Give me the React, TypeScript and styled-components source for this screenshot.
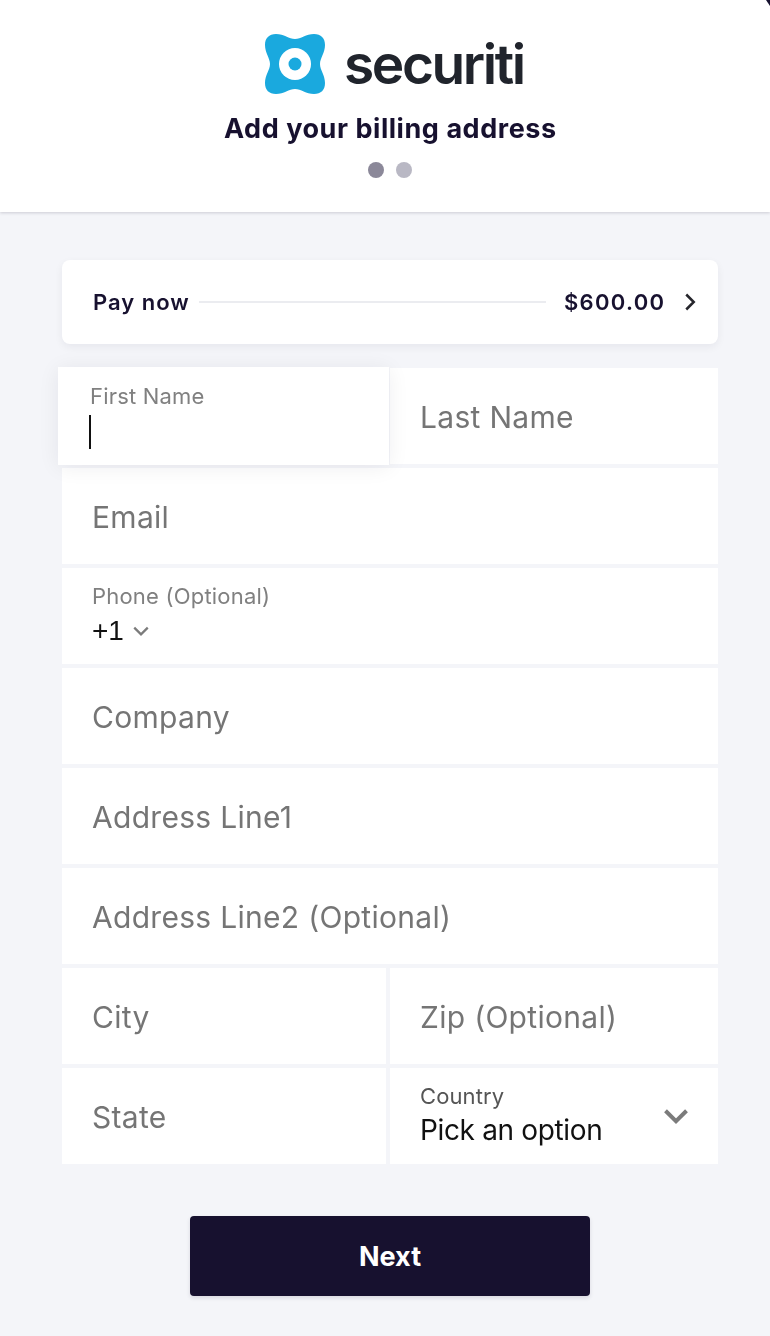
import React from 'react';
import styled, { createGlobalStyle, css } from 'styled-components';

const GlobalStyle = createGlobalStyle`
  html, body {
    margin: 0;
    padding: 0;
    background: #f4f5f9;
    font-family: Inter, "Liberation Sans", sans-serif;
  }
  * {
    box-sizing: border-box;
  }
`;

// own layer so the text gets plain grey antialiasing like the reference
const softText = css`
  will-change: transform;
`;

function Chevron({ size, stroke, weight }: { size: number; stroke: string; weight: number }) {
  return (
    <svg width={size} height={size} viewBox="0 0 24 24" fill="none">
      <path d="M3 7.5 L12 16.5 L21 7.5" stroke={stroke} strokeWidth={weight} />
    </svg>
  );
}

function App() {
  return (
    <Page>
      <GlobalStyle />
      <Header>
        <CornerMark viewBox="0 0 4 6">
          <path d="M0 0 H4 V6 Z" fill="#17112f" />
        </CornerMark>
        <Brand>
          <svg width="60" height="60" viewBox="1 1 60 60">
            <path
              d="M12 1 C20 1 25 6 31 6 C37 6 42 1 50 1 C57 1 61 5 61 12 C61 20 56 25 56 31 C56 37 61 42 61 50 C61 57 57 61 50 61 C42 61 37 56 31 56 C25 56 20 61 12 61 C5 61 1 57 1 50 C1 42 6 37 6 31 C6 25 1 20 1 12 C1 5 5 1 12 1 Z"
              fill="#1aa9de"
            />
            <circle cx="31" cy="31" r="16" fill="#fff" />
            <circle cx="31" cy="31" r="6.5" fill="#1aa9de" />
          </svg>
          <BrandName>securiti</BrandName>
        </Brand>
        <Title>Add your billing address</Title>
        <Dots>
          <Dot $active />
          <Dot />
        </Dots>
      </Header>

      <Main>
        <PayCard>
          <PayLabel>Pay now</PayLabel>
          <PayLine />
          <PayAmount>$600.00</PayAmount>
          <PayArrow>
            <Chevron size={20} stroke="#26262c" weight={3} />
          </PayArrow>
        </PayCard>

        <Form>
          <Row $split>
            <FocusedField>
              <SmallLabel>First Name</SmallLabel>
              <Caret />
            </FocusedField>
            <Field>
              <FieldInput placeholder="Last Name" />
            </Field>
          </Row>
          <Row>
            <Field>
              <FieldInput placeholder="Email" />
            </Field>
          </Row>
          <Row>
            <PhoneField>
              <SmallLabel>Phone (Optional)</SmallLabel>
              <PhoneCode>
                +1
                <Chevron size={18} stroke="#7b7b7b" weight={3} />
              </PhoneCode>
            </PhoneField>
          </Row>
          <Row>
            <Field>
              <FieldInput placeholder="Company" />
            </Field>
          </Row>
          <Row>
            <Field>
              <FieldInput placeholder="Address Line1" />
            </Field>
          </Row>
          <Row>
            <Field>
              <FieldInput placeholder="Address Line2 (Optional)" />
            </Field>
          </Row>
          <Row $split>
            <Field>
              <FieldInput placeholder="City" />
            </Field>
            <Field>
              <FieldInput placeholder="Zip (Optional)" />
            </Field>
          </Row>
          <Row $split>
            <Field>
              <FieldInput placeholder="State" />
            </Field>
            <SelectField>
              <SelectText>
                <DarkLabel>Country</DarkLabel>
                <SelectValue>Pick an option</SelectValue>
              </SelectText>
              <Chevron size={28} stroke="#7b7b7b" weight={3.4} />
            </SelectField>
          </Row>
        </Form>

        <NextButton>Next</NextButton>
      </Main>
    </Page>
  );
}

const Page = styled.div`
  width: 770px;
  height: 1336px;
  overflow: hidden;
  background: #f4f5f9;
`;

const Header = styled.header`
  position: relative;
  height: 212px;
  padding: 34px 0 0 10px;
  display: flex;
  flex-direction: column;
  align-items: center;
  background: #fff;
  box-shadow: 0 1px 3px rgba(23, 17, 47, 0.18);
`;

const CornerMark = styled.svg`
  position: absolute;
  top: 0;
  right: 0;
  width: 4px;
  height: 6px;
`;

const Brand = styled.div`
  display: flex;
  align-items: center;
  gap: 19px;
  height: 60px;
  margin-left: 9px;
`;

const BrandName = styled.span`
  font-size: 55px;
  line-height: 60px;
  font-weight: 600;
  letter-spacing: -2.4px;
  color: #20242c;
  ${softText}
`;

const Title = styled.h1`
  margin: 17px 0 0;
  font-size: 27px;
  line-height: 36px;
  font-weight: 700;
  letter-spacing: 0.55px;
  color: #17112f;
  ${softText}
`;

const Dots = styled.div`
  display: flex;
  gap: 12px;
  margin-top: 15px;
`;

const Dot = styled.span<{ $active?: boolean }>`
  width: 16px;
  height: 16px;
  border-radius: 50%;
  background: ${({ $active }) => ($active ? '#8b8899' : '#b9b8c4')};
`;

const Main = styled.main`
  padding: 48px 52px 0 62px;
`;

const PayCard = styled.div`
  height: 84px;
  padding: 0 18px 0 31px;
  display: flex;
  align-items: center;
  background: #fff;
  border-radius: 8px;
  box-shadow: 0 3px 8px rgba(23, 17, 47, 0.06);
`;

const PayLabel = styled.span`
  font-size: 22px;
  font-weight: 600;
  letter-spacing: 1px;
  color: #17112f;
  ${softText}
`;

const PayLine = styled.span`
  flex: 1;
  height: 2px;
  margin: 0 18px 0 9px;
  background: #ebecf0;
`;

const PayAmount = styled.span`
  font-size: 22px;
  font-weight: 600;
  letter-spacing: 1.3px;
  color: #17112f;
  ${softText}
`;

const PayArrow = styled.span`
  display: flex;
  margin-left: 15px;
  transform: rotate(-90deg);
`;

const Form = styled.form`
  margin: 24px 0 0;
  display: flex;
  flex-direction: column;
  gap: 4px;
`;

const Row = styled.div<{ $split?: boolean }>`
  height: 96px;
  display: grid;
  grid-template-columns: ${({ $split }) => ($split ? '324px 328px' : '1fr')};
  gap: 4px;
`;

const Field = styled.div`
  padding: 0 30px;
  display: flex;
  flex-direction: column;
  justify-content: center;
  background: #fff;
`;

const FocusedField = styled(Field)`
  position: relative;
  z-index: 1;
  margin: -1px -3px -1px -4px;
  padding: 15px 32px;
  justify-content: flex-start;
  box-shadow: 0 2px 20px rgba(23, 17, 47, 0.07);
`;

const PhoneField = styled(Field)`
  padding-bottom: 2px;
`;

const SelectField = styled(Field)`
  flex-direction: row;
  align-items: center;
  justify-content: space-between;
  padding-right: 28px;
`;

const SelectText = styled.div`
  padding-bottom: 3px;
`;

const FieldInput = styled.input`
  width: 100%;
  padding: 2px 0 0;
  border: 0;
  outline: 0;
  background: transparent;
  font-family: inherit;
  font-size: 30px;
  line-height: 40px;
  letter-spacing: 0.3px;
  color: #111;
  ${softText}
  &::placeholder {
    color: #757575;
    opacity: 1;
  }
`;

const SmallLabel = styled.label`
  display: block;
  font-size: 22px;
  line-height: 28px;
  letter-spacing: 0.2px;
  color: #808080;
  ${softText}
`;

const DarkLabel = styled(SmallLabel)`
  color: #555;
  letter-spacing: 0.1px;
`;

const Caret = styled.span`
  display: block;
  width: 2px;
  height: 34px;
  margin: 5px 0 0 -1px;
  background: #111;
`;

const PhoneCode = styled.div`
  display: flex;
  align-items: center;
  gap: 8px;
  margin-top: 4px;
  font-family: "Liberation Sans", sans-serif;
  font-size: 28px;
  line-height: 34px;
  color: #111;
  ${softText}
`;

const SelectValue = styled.div`
  margin-top: 2px;
  font-size: 28px;
  line-height: 36px;
  letter-spacing: -0.35px;
  color: #111;
  ${softText}
`;

const NextButton = styled.button`
  display: block;
  width: 400px;
  height: 80px;
  margin: 52px 0 0 128px;
  border: 0;
  border-radius: 4px;
  background: #17112f;
  box-shadow: 0 2px 4px rgba(23, 17, 47, 0.12);
  font-family: inherit;
  font-size: 27px;
  font-weight: 700;
  color: #fff;
`;

export default App;
